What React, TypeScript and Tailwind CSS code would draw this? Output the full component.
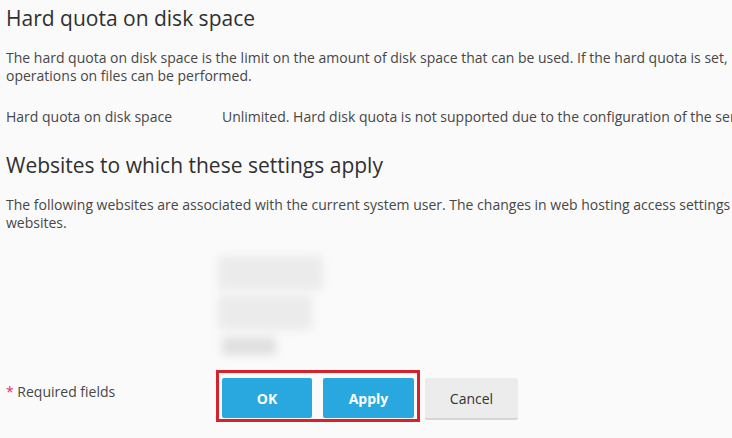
import React from 'react';

const body = 'text-[14px] leading-[18px] text-[#474747]';

export default function App() {
  return (
    <div className="h-[438px] w-[732px] overflow-hidden bg-[#fafafa] font-['Open_Sans',sans-serif]">
      <div className="w-[960px] pl-[6px]">
        {/* Hard quota section */}
        <h2 className="mt-[6px] text-[21px] leading-[25px] font-normal text-[#303030]">
          Hard quota on disk space
        </h2>
        <p className={`mt-[18px] ${body} whitespace-nowrap`}>
          The hard quota on disk space is the limit on the amount of disk space that can be used. If the hard quota is set, no write
          <br />
          operations on files can be performed.
        </p>
        <div className={`mt-[23px] flex ${body}`}>
          <div className="w-[216px] shrink-0">Hard quota on disk space</div>
          <div className="whitespace-nowrap">
            Unlimited. Hard disk quota is not supported due to the configuration of the server.
          </div>
        </div>

        {/* Websites section */}
        <h2 className="mt-[27px] text-[21px] leading-[25px] font-normal text-[#303030]">
          Websites to which these settings apply
        </h2>
        <p className={`mt-[18px] ${body} whitespace-nowrap`}>
          The following websites are associated with the current system user. The changes in web hosting access settings will be applied to all these
          <br />
          websites.
        </p>

        {/* Blurred site list */}
        <div className="mt-[24px] ml-[212px] flex flex-col">
          <div className="h-[34px] w-[105px] rounded-sm bg-[#ebebeb] blur-[4px]" />
          <div className="mt-[5px] h-[35px] w-[94px] rounded-sm bg-[#ebebeb] blur-[4px]" />
          <div className="mt-[7px] ml-[4px] h-[18px] w-[54px] rounded-sm bg-[#e0e0e0] blur-[4px]" />
        </div>

        {/* Footer */}
        <div className="mt-[15px] flex items-start">
          <div className={`w-[210px] shrink-0 pt-[13px] ${body}`}>
            <span className="text-[#e0336c]">*</span> Required fields
          </div>
          <div className="flex gap-[11px] border-[3px] border-[#d8222b] px-[3px] pt-[5px] pb-[1px]">
            <button className="h-[40px] w-[90px] rounded-[2px] bg-[#28a8df] text-[14px] font-bold text-white">
              OK
            </button>
            <button className="h-[40px] w-[91px] rounded-[2px] bg-[#28a8df] text-[14px] font-bold text-white">
              Apply
            </button>
          </div>
          <button className="mt-[8px] ml-[5px] h-[40px] w-[93px] rounded-[2px] bg-[#ececec] text-[14px] text-[#333] shadow-[0_2px_0_#d6d6d6]">
            Cancel
          </button>
        </div>
      </div>
    </div>
  );
}
